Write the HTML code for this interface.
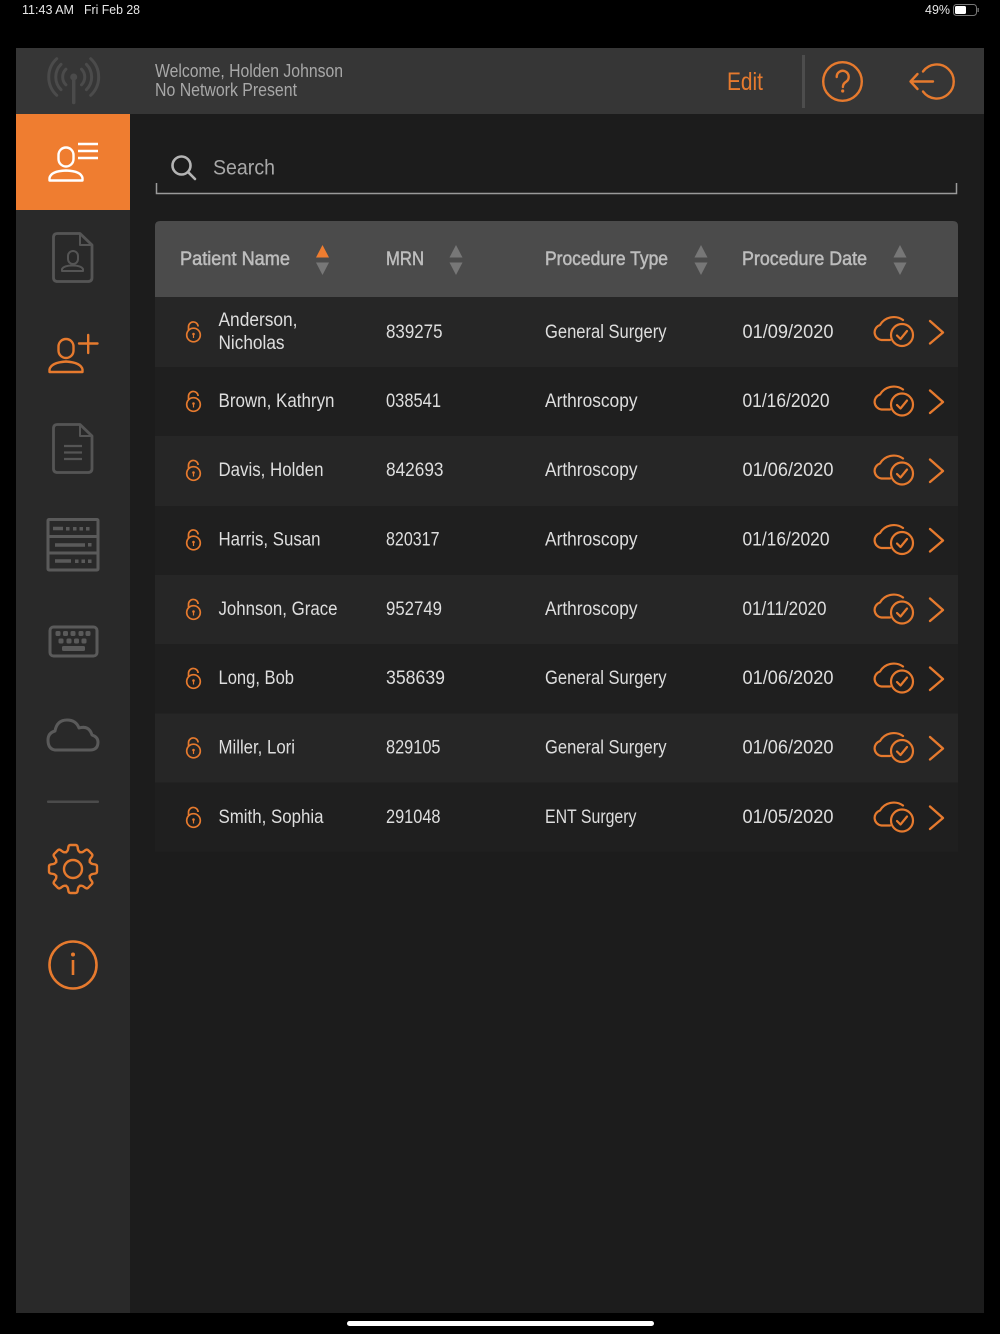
<!DOCTYPE html>
<html><head><meta charset="utf-8"><title>Patients</title>
<style>
html,body{margin:0;padding:0;background:#000;width:1000px;height:1334px;overflow:hidden}
svg{display:block}
text{font-family:"Liberation Sans",sans-serif}
.r{font-size:19px;fill:#dedede}
.h{font-size:19px;fill:#bdbdbd;stroke:#bdbdbd;stroke-width:.5}
.st{font-size:13px;fill:#e8e8e8}
.w{font-size:18px;fill:#a8a8a8}
</style></head><body>
<svg width="1000" height="1334" viewBox="0 0 1000 1334" xmlns="http://www.w3.org/2000/svg">
<defs>
<g id="rowi" fill="none" stroke="#e67a2e">
  <circle cx="193.500" cy="3.500" r="6.800" stroke-width="1.700"/>
  <path d="M188.500-1.500V-4.500a4.800 4.800 0 0 1 9.600-.5" stroke-width="1.700"/>
  <circle cx="193.500" cy="2.500" r="1.300" fill="#e67a2e" stroke="none"/>
  <path d="M193.500 3V6.500" stroke-width="1.200"/>
  <path d="M890 8.500H881.500A7.700 7.700 0 0 1 880-6.500A16 16 0 0 1 903-11.500" stroke-width="2.200" stroke-linecap="round"/>
  <circle cx="902" cy="3.500" r="11" stroke-width="2.200"/>
  <path d="M897 4l3.500 3.500L907-.5" stroke-width="2.200" stroke-linecap="round" stroke-linejoin="round"/>
  <path d="M930-10.500L943 1L930 12" stroke-width="2.400" stroke-linecap="round" stroke-linejoin="round"/>
</g>
<path id="tooth" d="M-7.500-16.500Q-5.500-17.500-5-19.500L-4.500-22.500Q-4-24-2.500-24H2.500Q4-24 4.500-22.500L5-19.500Q5.500-17.500 7.500-16.500" fill="none" stroke="#e67a2e" stroke-width="2.400" stroke-linejoin="round"/>
</defs>

<rect width="1000" height="1334" fill="#000"/>
<text class="st" x="22" y="14" textLength="52" lengthAdjust="spacingAndGlyphs">11:43 AM</text>
<text class="st" x="84" y="14" textLength="56" lengthAdjust="spacingAndGlyphs">Fri Feb 28</text>
<text class="st" x="925" y="14" textLength="25" lengthAdjust="spacingAndGlyphs">49%</text>
<rect x="953.500" y="4.500" width="23" height="11" rx="3" fill="none" stroke="#777" stroke-width="1"/>
<rect x="955" y="6" width="11" height="8" rx="1.500" fill="#fff"/>
<rect x="977.500" y="8" width="1.300" height="4" fill="#777"/>

<rect x="16" y="48" width="968" height="1265" fill="#1c1c1c"/>
<rect x="16" y="48" width="968" height="66" fill="#363636"/>
<rect x="16" y="114" width="114" height="1199" fill="#292929"/>
<rect x="16" y="114" width="114" height="96" fill="#ef7d30"/>

<!-- signal -->
<g fill="none" stroke="#4b4b4b" stroke-width="3" stroke-linecap="round">
  <path d="M73.700 78V102.500" stroke-width="3.500"/>
  <path d="M65.900 69.200A11 11 0 0 0 65.900 84.800M81.500 69.200A11 11 0 0 1 81.500 84.800"/>
  <path d="M61 64.300A18 18 0 0 0 61 89.700M86.400 64.300A18 18 0 0 1 86.400 89.700"/>
  <path d="M56.700 58.700A25 25 0 0 0 56.700 95.300M90.700 58.700A25 25 0 0 1 90.700 95.300"/>
</g>
<circle cx="73.700" cy="77" r="3.500" fill="#4b4b4b"/>

<text class="w" x="155" y="77" textLength="188" lengthAdjust="spacingAndGlyphs">Welcome, Holden Johnson</text>
<text class="w" x="155" y="96" textLength="142" lengthAdjust="spacingAndGlyphs">No Network Present</text>
<text x="727" y="90" font-size="25" fill="#e67a2e" textLength="36" lengthAdjust="spacingAndGlyphs">Edit</text>
<rect x="802" y="55" width="3" height="53" fill="#4d4d4d"/>
<g fill="none" stroke="#e67a2e" stroke-width="2.400" stroke-linecap="round" stroke-linejoin="round">
  <circle cx="842.500" cy="81.500" r="19.300"/>
  <path d="M836.700 77a6 6 0 1 1 9.500 4.700q-3.300 2-3.300 5.300"/>
  <path d="M923 71.500a17 17 0 1 1 0 20"/>
  <path d="M933 81.500H911M917.500 74L910.500 81.500L917.500 89"/>
</g>
<circle cx="842.700" cy="91" r="1.600" fill="#e67a2e"/>

<!-- sidebar: active -->
<g fill="none" stroke="#fff" stroke-width="2.400">
  <rect x="58.500" y="147.500" width="15" height="19" rx="7.500"/>
  <path d="M49.500 180.500V178Q51 171 66 170.500Q81 171 82.500 178V180.500Z" stroke-linejoin="round"/>
  <path d="M78 144H98M78 151H98M78 158H98"/>
</g>
<!-- doc person -->
<g fill="none" stroke="#555" stroke-width="2.800" stroke-linejoin="round">
  <path d="M80 233.500H57.500Q53.500 233.500 53.500 237.500V277.500Q53.500 281.500 57.500 281.500H88Q92 281.500 92 277.500V245Z"/>
  <path d="M80 233.500V245H92" stroke-width="2"/>
  <rect x="68" y="251" width="10" height="13" rx="5" stroke-width="2"/>
  <path d="M62 271V269Q64 265.500 72.500 265.500Q81 265.500 83 269V271Z" stroke-width="2"/>
</g>
<!-- add patient -->
<g fill="none" stroke="#e67a2e" stroke-width="2.400" stroke-linecap="round">
  <rect x="58.500" y="339" width="15" height="19" rx="7.500"/>
  <path d="M49.500 372V369.500Q51 362.500 66 361.500Q81 362.500 82.500 369.500V372Z" stroke-linejoin="round"/>
  <path d="M79 343.500H97.500M88.200 335V353"/>
</g>
<!-- doc lines -->
<g fill="none" stroke="#555" stroke-width="2.800" stroke-linejoin="round">
  <path d="M80 424.500H57.500Q53.500 424.500 53.500 428.500V468.500Q53.500 472.500 57.500 472.500H88Q92 472.500 92 468.500V436Z"/>
  <path d="M80 424.500V436H92" stroke-width="2"/>
  <path d="M64 446H82M64 452.500H82M64 459H82" stroke-width="2.200"/>
</g>
<!-- server -->
<g fill="none" stroke="#5a5a5a" stroke-width="3">
  <rect x="48" y="519.500" width="50" height="50.500" rx="1"/>
  <path d="M48 536.500H98M48 553H98"/>
  <path d="M53 528.500H63M55 545H85M55 561H71" stroke-width="3.400"/>
</g>
<g fill="#5a5a5a">
  <rect x="66" y="527" width="3.500" height="3.500"/><rect x="73" y="527" width="3.500" height="3.500"/><rect x="79.500" y="527" width="3.500" height="3.500"/><rect x="86" y="527" width="3.500" height="3.500"/>
  <rect x="88" y="543" width="3.500" height="3.500"/>
  <rect x="75" y="559.500" width="3.500" height="3.500"/><rect x="81.500" y="559.500" width="3.500" height="3.500"/><rect x="88" y="559.500" width="3.500" height="3.500"/>
</g>
<!-- keyboard -->
<rect x="50" y="627" width="47" height="29" rx="3.500" fill="none" stroke="#5a5a5a" stroke-width="3"/>
<g fill="#5a5a5a">
  <rect x="55.500" y="631" width="5" height="5" rx="1.500"/><rect x="63" y="631" width="5" height="5" rx="1.500"/><rect x="70.500" y="631" width="5" height="5" rx="1.500"/><rect x="78.500" y="631" width="5" height="5" rx="1.500"/><rect x="85.500" y="631" width="5" height="5" rx="1.500"/>
  <rect x="58.500" y="638.500" width="5" height="5" rx="1.500"/><rect x="66.500" y="638.500" width="5" height="5" rx="1.500"/><rect x="74" y="638.500" width="5" height="5" rx="1.500"/><rect x="81.500" y="638.500" width="5" height="5" rx="1.500"/>
  <rect x="62" y="646" width="23" height="5" rx="1.500"/>
</g>
<!-- cloud -->
<path d="M55 750Q48 749 48 740Q48 733 55 731Q57 720 67 720Q76 720 79 728Q89 725 92 735Q98 737 98 742Q98 750 90 750Z" fill="none" stroke="#5a5a5a" stroke-width="3" stroke-linejoin="round"/>
<rect x="47" y="800.500" width="52" height="2.500" rx="1" fill="#4b4b4b"/>
<!-- gear -->
<g transform="translate(73 869)">
  <use href="#tooth"/><use href="#tooth" transform="rotate(45)"/><use href="#tooth" transform="rotate(90)"/><use href="#tooth" transform="rotate(135)"/><use href="#tooth" transform="rotate(180)"/><use href="#tooth" transform="rotate(225)"/><use href="#tooth" transform="rotate(270)"/><use href="#tooth" transform="rotate(315)"/>
  <circle r="9" fill="none" stroke="#e67a2e" stroke-width="2.400"/>
</g>
<!-- info -->
<circle cx="73" cy="965" r="23.500" fill="none" stroke="#e67a2e" stroke-width="2.600"/>
<circle cx="73" cy="954.500" r="2" fill="#e67a2e"/>
<path d="M73 960V975" stroke="#e67a2e" stroke-width="2.600" fill="none"/>

<!-- search -->
<g fill="none" stroke="#b4b4b4" stroke-width="2.600" stroke-linecap="round">
  <circle cx="181.500" cy="165.500" r="9"/>
  <path d="M188.200 172.200L195 179"/>
</g>
<text x="213" y="174.500" font-size="21" fill="#a8a8a8" textLength="62" lengthAdjust="spacingAndGlyphs">Search</text>
<path d="M156.500 183V193.500H956.500V183" fill="none" stroke="#9a9a9a" stroke-width="1.500"/>

<!-- table header -->
<path d="M155 297V226Q155 221 160 221H953Q958 221 958 226V297Z" fill="#4b4b4b"/>
<text class="h" x="180" y="265" textLength="110" lengthAdjust="spacingAndGlyphs">Patient Name</text>
<text class="h" x="386" y="265" textLength="38" lengthAdjust="spacingAndGlyphs">MRN</text>
<text class="h" x="545" y="265" textLength="123" lengthAdjust="spacingAndGlyphs">Procedure Type</text>
<text class="h" x="742" y="265" textLength="125" lengthAdjust="spacingAndGlyphs">Procedure Date</text>
<path d="M322.500 245L329 257.500H316Z" fill="#ef7d30"/><path d="M322.500 275L329 262.500H316Z" fill="#777"/>
<path d="M456 245L462.500 257.500H449.500Z" fill="#777"/><path d="M456 275L462.500 262.500H449.500Z" fill="#777"/>
<path d="M701 245L707.500 257.500H694.500Z" fill="#777"/><path d="M701 275L707.500 262.500H694.500Z" fill="#777"/>
<path d="M900 245L906.500 257.500H893.500Z" fill="#777"/><path d="M900 275L906.500 262.500H893.500Z" fill="#777"/>

<!-- rows -->
<rect x="155" y="297" width="803" height="70" fill="#262626"/>
<rect x="155" y="367" width="803" height="69" fill="#1f1f1f"/>
<rect x="155" y="436" width="803" height="70" fill="#262626"/>
<rect x="155" y="506" width="803" height="69" fill="#1f1f1f"/>
<rect x="155" y="575" width="803" height="69" fill="#262626"/>
<rect x="155" y="644" width="803" height="69.500" fill="#1f1f1f"/>
<rect x="155" y="713.500" width="803" height="69" fill="#262626"/>
<rect x="155" y="782.500" width="803" height="69" fill="#1f1f1f"/>

<use href="#rowi" y="331.500"/><use href="#rowi" y="401"/><use href="#rowi" y="470"/><use href="#rowi" y="539.500"/><use href="#rowi" y="609"/><use href="#rowi" y="678"/><use href="#rowi" y="747.500"/><use href="#rowi" y="817"/>

<text class="r" x="218.500" y="326" textLength="79" lengthAdjust="spacingAndGlyphs">Anderson,</text>
<text class="r" x="218.500" y="349" textLength="66" lengthAdjust="spacingAndGlyphs">Nicholas</text>
<text class="r" x="386" y="338" textLength="56.500" lengthAdjust="spacingAndGlyphs">839275</text>
<text class="r" x="545" y="338" textLength="121.500" lengthAdjust="spacingAndGlyphs">General Surgery</text>
<text class="r" x="742.500" y="338" textLength="91" lengthAdjust="spacingAndGlyphs">01/09/2020</text>

<text class="r" x="218.500" y="407" textLength="116" lengthAdjust="spacingAndGlyphs">Brown, Kathryn</text>
<text class="r" x="386" y="407" textLength="55" lengthAdjust="spacingAndGlyphs">038541</text>
<text class="r" x="545" y="407" textLength="92.500" lengthAdjust="spacingAndGlyphs">Arthroscopy</text>
<text class="r" x="742.500" y="407" textLength="87" lengthAdjust="spacingAndGlyphs">01/16/2020</text>

<text class="r" x="218.500" y="476" textLength="105" lengthAdjust="spacingAndGlyphs">Davis, Holden</text>
<text class="r" x="386" y="476" textLength="57.500" lengthAdjust="spacingAndGlyphs">842693</text>
<text class="r" x="545" y="476" textLength="92.500" lengthAdjust="spacingAndGlyphs">Arthroscopy</text>
<text class="r" x="742.500" y="476" textLength="91" lengthAdjust="spacingAndGlyphs">01/06/2020</text>

<text class="r" x="218.500" y="545.500" textLength="102" lengthAdjust="spacingAndGlyphs">Harris, Susan</text>
<text class="r" x="386" y="545.500" textLength="53.500" lengthAdjust="spacingAndGlyphs">820317</text>
<text class="r" x="545" y="545.500" textLength="92.500" lengthAdjust="spacingAndGlyphs">Arthroscopy</text>
<text class="r" x="742.500" y="545.500" textLength="87" lengthAdjust="spacingAndGlyphs">01/16/2020</text>

<text class="r" x="218.500" y="615" textLength="119" lengthAdjust="spacingAndGlyphs">Johnson, Grace</text>
<text class="r" x="386" y="615" textLength="56" lengthAdjust="spacingAndGlyphs">952749</text>
<text class="r" x="545" y="615" textLength="92.500" lengthAdjust="spacingAndGlyphs">Arthroscopy</text>
<text class="r" x="742.500" y="615" textLength="84" lengthAdjust="spacingAndGlyphs">01/11/2020</text>

<text class="r" x="218.500" y="684" textLength="75.500" lengthAdjust="spacingAndGlyphs">Long, Bob</text>
<text class="r" x="386" y="684" textLength="59" lengthAdjust="spacingAndGlyphs">358639</text>
<text class="r" x="545" y="684" textLength="121.500" lengthAdjust="spacingAndGlyphs">General Surgery</text>
<text class="r" x="742.500" y="684" textLength="91" lengthAdjust="spacingAndGlyphs">01/06/2020</text>

<text class="r" x="218.500" y="753.500" textLength="76.500" lengthAdjust="spacingAndGlyphs">Miller, Lori</text>
<text class="r" x="386" y="753.500" textLength="54.500" lengthAdjust="spacingAndGlyphs">829105</text>
<text class="r" x="545" y="753.500" textLength="121.500" lengthAdjust="spacingAndGlyphs">General Surgery</text>
<text class="r" x="742.500" y="753.500" textLength="91" lengthAdjust="spacingAndGlyphs">01/06/2020</text>

<text class="r" x="218.500" y="823" textLength="105" lengthAdjust="spacingAndGlyphs">Smith, Sophia</text>
<text class="r" x="386" y="823" textLength="54.500" lengthAdjust="spacingAndGlyphs">291048</text>
<text class="r" x="545" y="823" textLength="91.500" lengthAdjust="spacingAndGlyphs">ENT Surgery</text>
<text class="r" x="742.500" y="823" textLength="91" lengthAdjust="spacingAndGlyphs">01/05/2020</text>

<rect x="347" y="1321" width="307" height="5" rx="2.500" fill="#fff"/>
</svg>
</body></html>
